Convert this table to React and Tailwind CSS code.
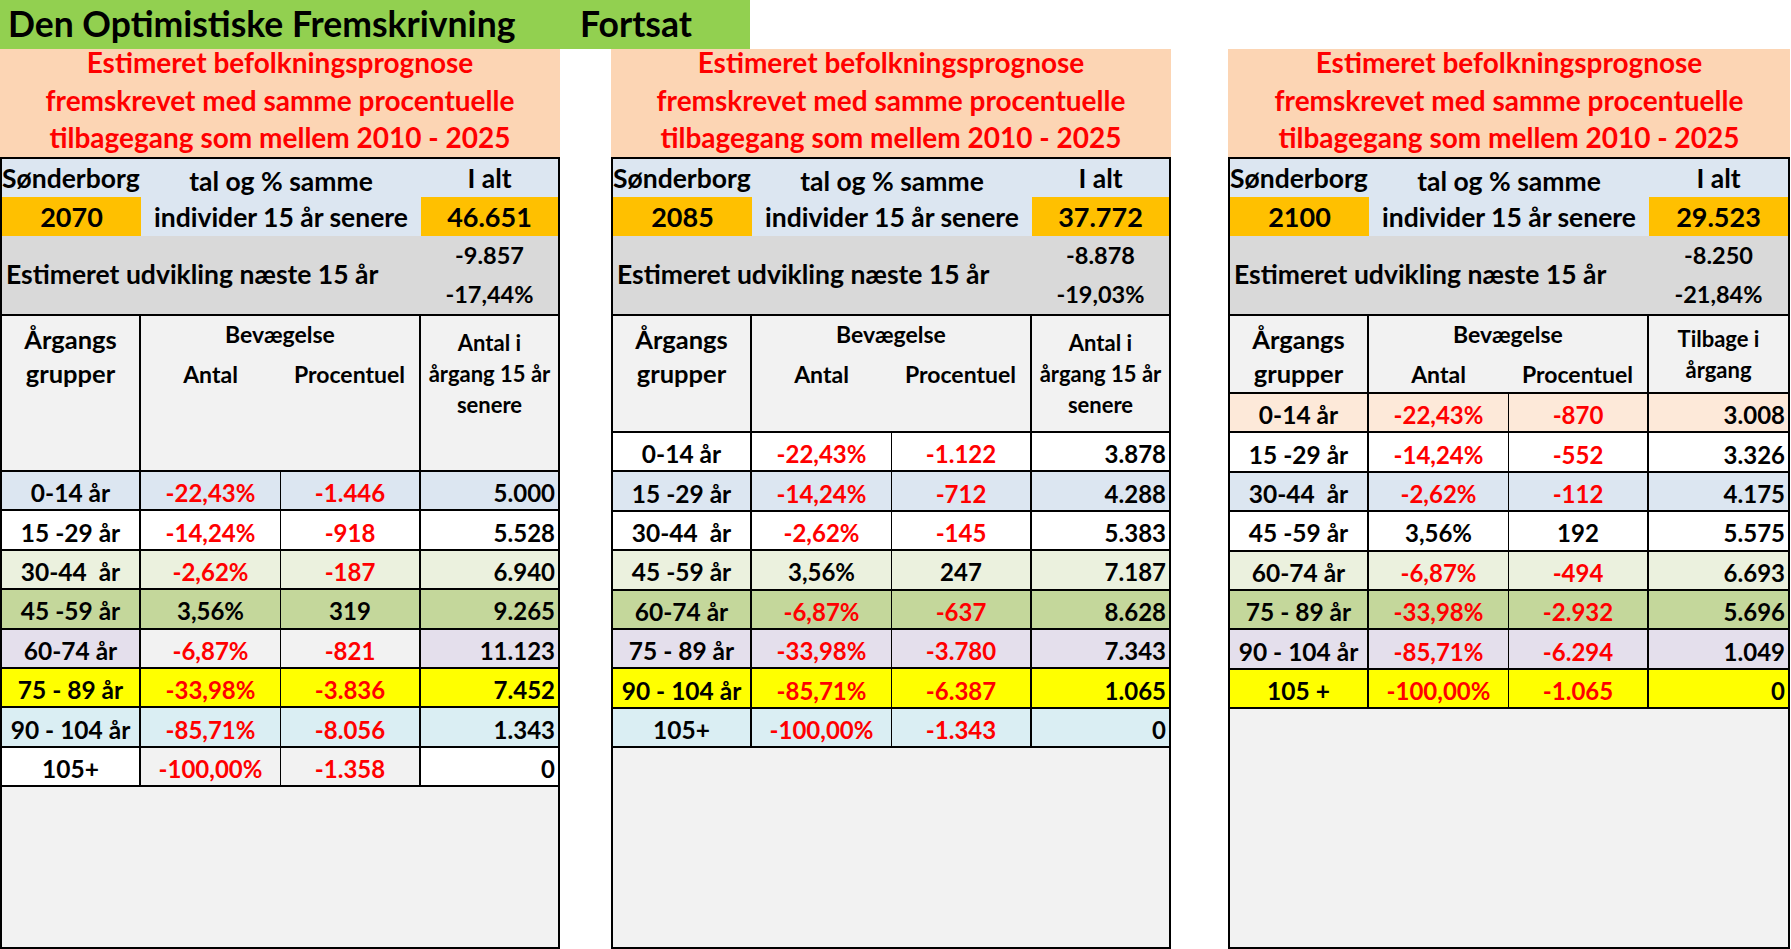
import React from 'react';

const W = 'bg-white';
const BL = 'bg-[#dce6f1]';
const OL = 'bg-[#ebf1de]';
const OV = 'bg-[#c4d79b]';
const LV = 'bg-[#e4dfec]';
const YE = 'bg-[#ffff00]';
const AQ = 'bg-[#daeef3]';
const PE = 'bg-[#fde9d9]';
const GR = 'bg-[#f2f2f2]';

const panels = [
  {
    year: '2070', total: '46.651', d1: '-9.857', d2: '-17,44%',
    headH: 'h-[156px]', col4: ['Antal i', 'årgang 15 år', 'senere'], col4pt: 'pt-[11px]',
    w: 'w-[560px]', ml: '',
    rows: [
      ['0-14 år', '-22,43%', '-1.446', '5.000', BL, BL],
      ['15 -29 år', '-14,24%', '-918', '5.528', W, W],
      ['30-44  år', '-2,62%', '-187', '6.940', OL, OL],
      ['45 -59 år', '3,56%', '319', '9.265', OV, OV],
      ['60-74 år', '-6,87%', '-821', '11.123', LV, GR],
      ['75 - 89 år', '-33,98%', '-3.836', '7.452', YE, YE],
      ['90 - 104 år', '-85,71%', '-8.056', '1.343', AQ, AQ],
      ['105+', '-100,00%', '-1.358', '0', W, GR],
    ],
  },
  {
    year: '2085', total: '37.772', d1: '-8.878', d2: '-19,03%',
    headH: 'h-[117px]', col4: ['Antal i', 'årgang 15 år', 'senere'], col4pt: 'pt-[11px]',
    w: 'w-[560px]', ml: 'ml-[51px]',
    rows: [
      ['0-14 år', '-22,43%', '-1.122', '3.878', W, W],
      ['15 -29 år', '-14,24%', '-712', '4.288', BL, BL],
      ['30-44  år', '-2,62%', '-145', '5.383', W, W],
      ['45 -59 år', '3,56%', '247', '7.187', OL, OL],
      ['60-74 år', '-6,87%', '-637', '8.628', OV, OV],
      ['75 - 89 år', '-33,98%', '-3.780', '7.343', LV, LV],
      ['90 - 104 år', '-85,71%', '-6.387', '1.065', YE, YE],
      ['105+', '-100,00%', '-1.343', '0', AQ, AQ],
    ],
  },
  {
    year: '2100', total: '29.523', d1: '-8.250', d2: '-21,84%',
    headH: 'h-[78px]', col4: ['Tilbage i', 'årgang'], col4pt: 'pt-[7px]',
    w: 'w-[562px]', ml: 'ml-[57px]',
    rows: [
      ['0-14 år', '-22,43%', '-870', '3.008', PE, PE],
      ['15 -29 år', '-14,24%', '-552', '3.326', W, W],
      ['30-44  år', '-2,62%', '-112', '4.175', BL, BL],
      ['45 -59 år', '3,56%', '192', '5.575', W, W],
      ['60-74 år', '-6,87%', '-494', '6.693', OL, OL],
      ['75 - 89 år', '-33,98%', '-2.932', '5.696', OV, OV],
      ['90 - 104 år', '-85,71%', '-6.294', '1.049', LV, LV],
      ['105 +', '-100,00%', '-1.065', '0', YE, YE],
    ],
  },
];

function col(v) {
  return v.startsWith('-') ? 'text-[#ff0000]' : 'text-black';
}

function DataRow({ r }) {
  const [label, a, b, c, outer, mid] = r;
  return (
    <div className="h-[39.4px] shrink-0 grid grid-cols-[139px_140px_140px_1fr] border-b-2 border-black text-[24px] leading-[29px] font-bold">
      <div className={`${outer} border-r-2 border-black flex items-center justify-center pt-[4px] whitespace-pre text-[24.5px]`}>{label}</div>
      <div className={`${mid} border-r border-black flex items-center justify-center pt-[4px] ${col(a)}`}>{a}</div>
      <div className={`${mid} border-r-2 border-black flex items-center justify-center pt-[4px] ${col(b)}`}>{b}</div>
      <div className={`${outer} flex items-center justify-end pr-[3px] pt-[4px] ${col(c)}`}>{c}</div>
    </div>
  );
}

function Panel({ p }) {
  return (
    <div className={`flex flex-col h-[900px] shrink-0 ${p.w} ${p.ml}`}>
      <div className="h-[108px] shrink-0 bg-[#fcd5b4] text-[#ff0000] font-bold text-[28px] leading-[37.5px] text-center whitespace-nowrap">
        <div className="-mt-[5px]">
          <div>Estimeret befolkningsprognose</div>
          <div>fremskrevet med samme procentuelle</div>
          <div>tilbagegang som mellem 2010 - 2025</div>
        </div>
      </div>
      <div className="flex-1 border-2 border-black bg-[#f2f2f2] flex flex-col text-black">
        <div className="grid grid-cols-[139px_280px_1fr] grid-rows-[38px_39px] bg-[#dce6f1] font-bold shrink-0">
          <div className="overflow-hidden whitespace-nowrap text-[26.5px] leading-[38px]">Sønderborg</div>
          <div className="row-span-2 text-center text-[26.5px] leading-[36px] pt-[4px] whitespace-nowrap">
            <div>tal og % samme</div>
            <div>individer 15 år senere</div>
          </div>
          <div className="text-center text-[26.5px] leading-[38px]">I alt</div>
          <div className="bg-[#ffc000] text-center text-[27px] leading-[39px]">{p.year}</div>
          <div className="bg-[#ffc000] text-center text-[27px] leading-[39px]">{p.total}</div>
        </div>
        <div className="h-[80px] shrink-0 border-b-2 border-black bg-[#d9d9d9] flex font-bold">
          <div className="w-[419px] flex items-center pl-[4px] text-[26.5px] whitespace-nowrap">Estimeret udvikling næste 15 år</div>
          <div className="flex-1 flex flex-col text-[23.5px]">
            <div className="h-[39px] flex items-center justify-center">{p.d1}</div>
            <div className="h-[39px] flex items-center justify-center">{p.d2}</div>
          </div>
        </div>
        <div className={`${p.headH} shrink-0 border-b-2 border-black grid grid-cols-[139px_280px_1fr] font-bold`}>
          <div className="border-r-2 border-black text-center text-[25.5px] leading-[34px] pt-[6px]">
            <div>Årgangs</div>
            <div>grupper</div>
          </div>
          <div className="border-r-2 border-black text-center text-[23px] leading-[32px] pt-[2px]">
            <div>Bevægelse</div>
            <div className="grid grid-cols-2 mt-[8px]">
              <div>Antal</div>
              <div>Procentuel</div>
            </div>
          </div>
          <div className={`text-center text-[22px] leading-[31px] whitespace-nowrap ${p.col4pt}`}>
            {p.col4.map((t) => (
              <div key={t}>{t}</div>
            ))}
          </div>
        </div>
        {p.rows.map((r) => (
          <DataRow key={r[0]} r={r} />
        ))}
        <div className="flex-1" />
      </div>
    </div>
  );
}

export default function App() {
  return (
    <div className="w-[1791px] h-[949px] bg-white overflow-hidden font-['Lato',sans-serif] text-black">
      <div className="w-[750px] h-[49px] bg-[#92d050] flex font-bold text-[35.5px] leading-[47px] whitespace-nowrap">
        <div className="w-[580px] pl-[8px]">Den Optimistiske Fremskrivning</div>
        <div>Fortsat</div>
      </div>
      <div className="flex">
        {panels.map((p) => (
          <Panel key={p.year} p={p} />
        ))}
      </div>
    </div>
  );
}
